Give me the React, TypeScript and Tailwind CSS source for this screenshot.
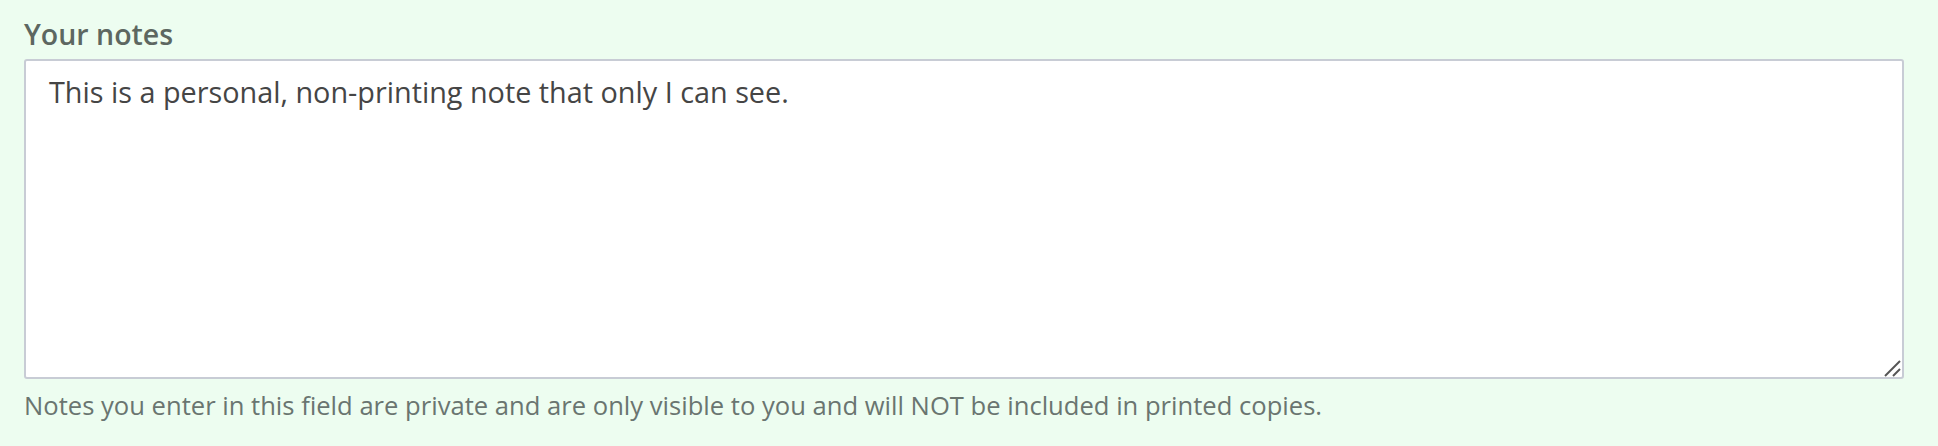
export default function App() {
  return (
    <div
      className="min-h-screen w-full bg-[#edfdf0] pl-6 pr-[34px] pt-4"
      style={{ fontFamily: '"Open Sans", "Noto Sans", sans-serif' }}
    >
      <label htmlFor="notes" className="block text-[28.5px] font-semibold leading-[36px] text-[#5d6761]">
        Your notes
      </label>
      <div className="relative mt-[7px]">
        <textarea
          id="notes"
          defaultValue="This is a personal, non-printing note that only I can see."
          className="block h-[320px] w-full resize-none rounded-[3px] border-2 border-[#c8ccd5] bg-white pl-[23px] pr-4 pt-[10px] text-[28.8px] leading-[42px] text-[#454545] outline-none"
        />
        {/* resize grip */}
        <svg
          className="pointer-events-none absolute bottom-[2px] right-[2px]"
          width="18"
          height="18"
          viewBox="0 0 18 18"
        >
          <line x1="1" y1="17" x2="16" y2="2" stroke="#555" strokeWidth="2" />
          <line x1="9" y1="17" x2="16" y2="10" stroke="#555" strokeWidth="2" />
        </svg>
      </div>
      <p className="mt-[7px] text-[25.6px] leading-[39px] text-[#6a7570]">
        Notes you enter in this field are private and are only visible to you and will NOT be included in printed copies.
      </p>
    </div>
  )
}
